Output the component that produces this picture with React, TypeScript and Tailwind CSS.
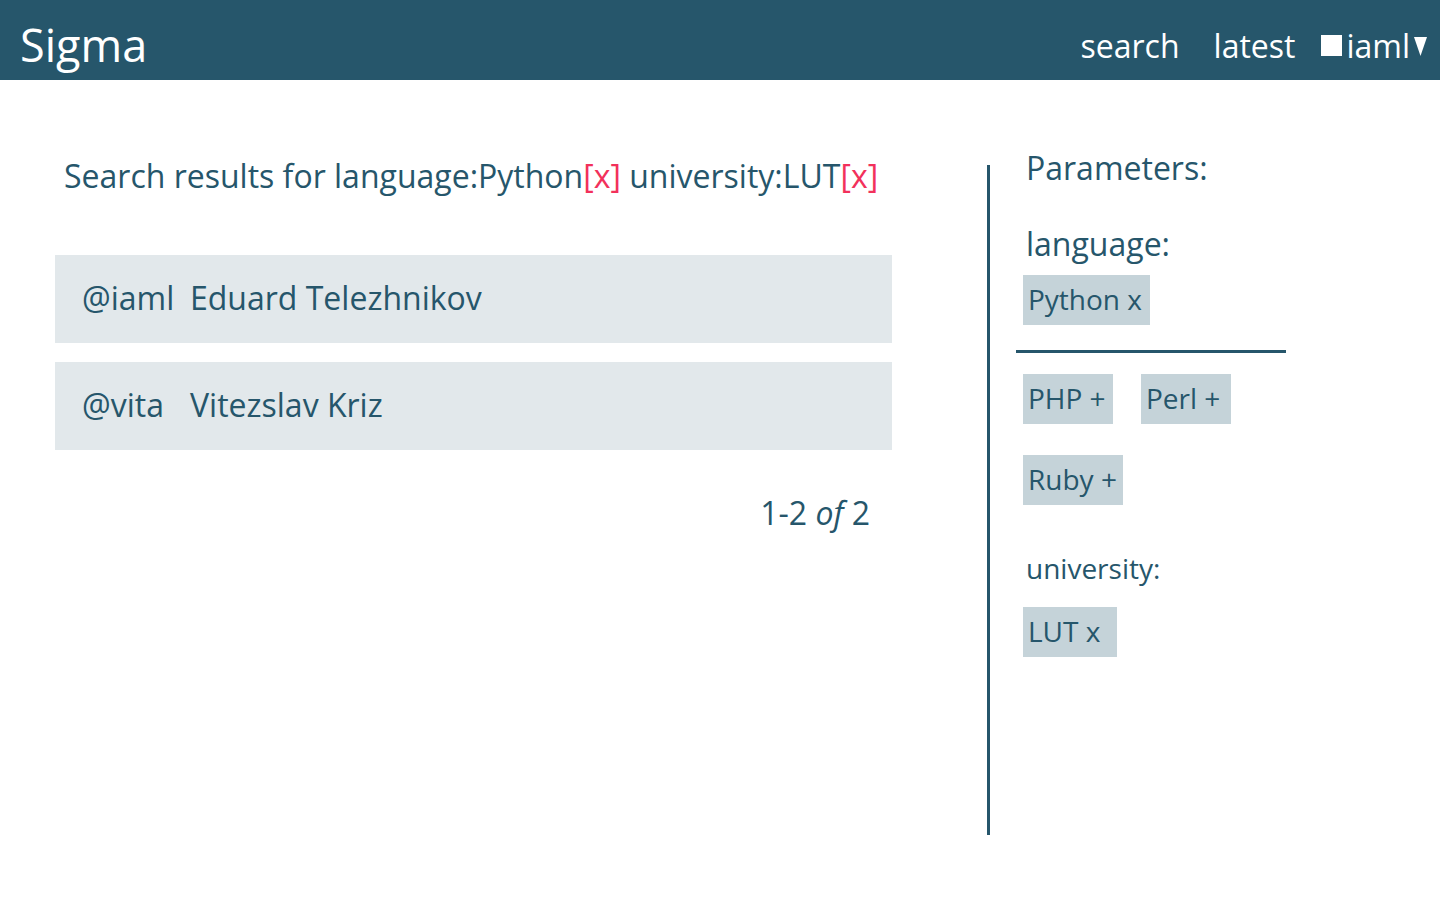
const users = [
  { handle: "@iaml", name: "Eduard Telezhnikov" },
  { handle: "@vita", name: "Vitezslav Kriz" },
];

function Tag({ label, width }: { label: string; width: string }) {
  return (
    <div className={`flex h-[50px] items-center bg-[#c5d3d9] pb-[3px] pl-[5px] text-[28px] text-[#26566b] ${width}`}>
      {label}
    </div>
  );
}

export default function App() {
  return (
    <div className="min-h-screen bg-white font-['Open_Sans',sans-serif] text-[#26566b]">
      <header className="flex h-[80px] items-center justify-between bg-[#26566b] pl-[20px] pr-[12px] pt-[8px] text-white">
        <div className="text-[45px] leading-none">Sigma</div>
        <nav className="mt-[3px] flex items-center text-[32px] leading-none">
          <a href="#">search</a>
          <a href="#" className="ml-[34px]">latest</a>
          <a href="#" className="ml-[26px] flex items-center">
            <span className="mr-[4px] inline-block h-[21px] w-[21px] bg-white" />
            iaml
            <svg className="ml-[3px] h-[20px] w-[15px]" viewBox="0 0 15 20">
              <polygon points="1,1 14,1 7.5,20" fill="white" />
            </svg>
          </a>
        </nav>
      </header>

      <main className="flex pl-[55px]">
        <section className="w-[837px] pt-[74px]">
          <h1 className="ml-[9px] text-[32px] leading-[44px]">
            Search results for language:Python<span className="text-[#f2315b]">[x]</span> university:LUT
            <span className="text-[#f2315b]">[x]</span>
          </h1>
          <div className="mt-[57px] flex flex-col gap-[19px]">
            {users.map((u) => (
              <div key={u.handle} className="flex h-[88px] items-center bg-[#e2e8eb] pb-[3px] pl-[27px] text-[32px] leading-[44px]">
                <span className="w-[108px]">{u.handle}</span>
                <span>{u.name}</span>
              </div>
            ))}
          </div>
          <div className="mt-[41px] pr-[22px] text-right text-[32px] leading-[44px]">
            1-2 <i>of</i> 2
          </div>
        </section>

        <aside className="ml-[95px] flex">
          <div className="mt-[85px] h-[670px] w-[3px] bg-[#26566b]" />
          <div className="pl-[26px] pt-[66px]">
            <div className="ml-[10px] text-[32px] leading-[44px]">Parameters:</div>
            <div className="ml-[10px] mt-[32px] text-[32px] leading-[44px]">language:</div>
            <div className="ml-[7px] mt-[9px] flex">
              <Tag label="Python x" width="w-[127px]" />
            </div>
            <div className="mt-[25px] h-[3px] w-[270px] bg-[#26566b]" />
            <div className="ml-[7px] mt-[21px] flex gap-[28px]">
              <Tag label="PHP +" width="w-[90px]" />
              <Tag label="Perl +" width="w-[90px]" />
            </div>
            <div className="ml-[7px] mt-[31px] flex">
              <Tag label="Ruby +" width="w-[100px]" />
            </div>
            <div className="ml-[10px] mt-[42px] text-[28px]">university:</div>
            <div className="ml-[7px] mt-[18px] flex">
              <Tag label="LUT x" width="w-[94px]" />
            </div>
          </div>
        </aside>
      </main>
    </div>
  );
}
